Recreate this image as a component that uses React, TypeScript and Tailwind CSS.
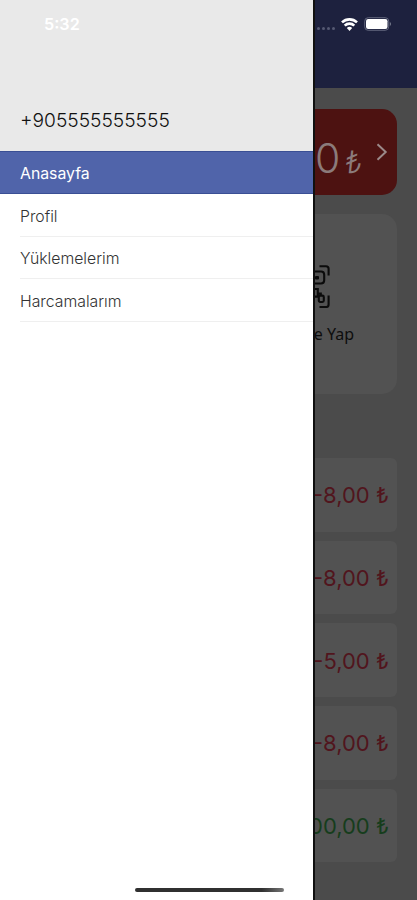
import clsx from 'clsx';

const menuItems = ['Anasayfa', 'Profil', 'Yüklemelerim', 'Harcamalarım'];

const transactions = [
  { amount: '-8,00 ₺', income: false },
  { amount: '-8,00 ₺', income: false },
  { amount: '-5,00 ₺', income: false },
  { amount: '-8,00 ₺', income: false },
  { amount: '00,00 ₺', income: true },
];

function StatusBar() {
  return (
    <div className="absolute inset-x-0 top-0 z-10 flex h-12 items-center justify-between pr-[25px] pl-[44px] text-white">
      <span className="text-[16.2px] leading-none font-semibold">5:32</span>
      <div className="flex items-center">
        <div className="mt-[9px] mr-[6px] flex gap-[2px]">
          {[0, 1, 2, 3].map((dot) => (
            <span key={dot} className="size-[3px] rounded-full bg-[#555973]" />
          ))}
        </div>
        <svg width="17" height="13" viewBox="0 0 17 13" fill="none" stroke="currentColor" strokeWidth="2.6">
          <path d="M1 4.4a10.8 10.8 0 0 1 15 0" />
          <path d="M3.7 7.6a6.8 6.8 0 0 1 9.6 0" />
          <path d="M8.5 13 5.8 10a3.9 3.9 0 0 1 5.4 0z" fill="currentColor" stroke="none" />
        </svg>
        <svg className="ml-[6px]" width="28" height="14" viewBox="0 0 28 14">
          <rect x="0.7" y="0.7" width="24" height="12.6" rx="3.5" fill="none" stroke="#62667d" />
          <rect x="2" y="2" width="21.5" height="10" rx="2.2" fill="currentColor" />
          <path d="M25.8 5v4q1.2-.6 1.2-2t-1.2-2z" fill="#777b8e" />
        </svg>
      </div>
    </div>
  );
}

function Drawer() {
  return (
    <aside className="relative flex w-[313px] shrink-0 flex-col bg-white">
      <div className="flex h-[151px] items-end bg-[#e9e9e9] pb-[20px] pl-[20px]">
        <span className="text-[19.2px] leading-[22px] font-light text-[#111]">+905555555555</span>
      </div>
      <nav>
        {menuItems.map((item, index) => (
          <div
            key={item}
            className={clsx(
              'pl-[20px] text-[15.8px]',
              index === 0
                ? 'h-[43px] border-y border-[#3a4f94] bg-[#5064aa] text-white'
                : 'h-[42.5px] font-light text-[#333]',
            )}
          >
            <div
              className={clsx(
                'flex h-full items-center',
                index > 0 ? 'border-b border-[#efefef] pt-[4px]' : 'pt-[2px]',
              )}
            >
              {item}
            </div>
          </div>
        ))}
      </nav>
      {/* Home indicator */}
      <div className="mt-auto mb-[8px] ml-[135px] h-[4px] w-[149px] rounded-full bg-linear-to-r from-[#303030] from-85% to-[#777]" />
    </aside>
  );
}

function QrIcon() {
  return (
    <svg width="16" height="44" viewBox="0 0 16 44" fill="none" stroke="#0b0b0b" strokeWidth="2.1">
      <path d="M4.5 2.2H11q2.6 0 2.6 2.6v6.7" />
      <path d="M0 7.5h6q3.2 0 3.2 3.2v5.6q0 3.2-3.2 3.2H0" />
      <rect x="0" y="12" width="4" height="3.4" rx="1" fill="#0b0b0b" stroke="none" />
      <path d="M0 25h2.8v7.6H0M2.8 29.6h3v2" />
      <rect x="3.8" y="31.6" width="5" height="6.4" rx="1.4" />
      <path d="M4.5 43H11q2.6 0 2.6-2.6v-9" />
    </svg>
  );
}

function HomeScreen() {
  return (
    <main className="min-w-0 flex-1 overflow-hidden border-l-2 border-[#101010] bg-[#4b4b4b]">
      <div className="h-[88px] bg-[#1d213e]" />
      <div className="pt-[21px] pr-[20px]">
        <section className="flex h-[86px] items-center justify-end overflow-hidden rounded-r-[15px] bg-[#4d1211] pr-[9px] text-[#8b7b7b]">
          <span className="mt-[13px] flex items-baseline gap-[7px] leading-none whitespace-nowrap">
            <span className="text-[41px] font-light tracking-[-2px]">0</span>
            <span className="-skew-x-6 text-[31px] font-light">₺</span>
          </span>
          <svg className="ml-[13px]" width="12" height="18" viewBox="0 0 12 18" fill="none" stroke="#9b8989" strokeWidth="2">
            <path d="m1.5 1.2 8.3 7.8-8.3 7.8" />
          </svg>
        </section>

        <section className="mt-[19px] flex h-[180px] flex-col overflow-hidden rounded-r-[15px] bg-[#525252] pt-[50px]">
          <QrIcon />
          <span className="mt-[14px] flex w-[39px] justify-end font-['Noto_Sans'] text-[16px] leading-[24px] whitespace-nowrap text-[#0d0d0d]">
            e Yap
          </span>
        </section>

        <section className="mt-[64px] flex flex-col gap-[9px]">
          {transactions.map(({ amount, income }, index) => (
            <div
              key={index}
              className={clsx(
                'flex h-[73.7px] items-center justify-end overflow-hidden rounded-r-[6px] bg-[#525252] pt-[2px] pr-[8px] text-[22px] whitespace-nowrap',
                income ? 'text-[#163d1c]' : 'text-[#51151d]',
              )}
            >
              {amount}
            </div>
          ))}
        </section>
      </div>
    </main>
  );
}

export default function App() {
  return (
    <div className="relative flex h-[900px] w-[417px] overflow-hidden font-['Inter',sans-serif]">
      <StatusBar />
      <Drawer />
      <HomeScreen />
    </div>
  );
}
